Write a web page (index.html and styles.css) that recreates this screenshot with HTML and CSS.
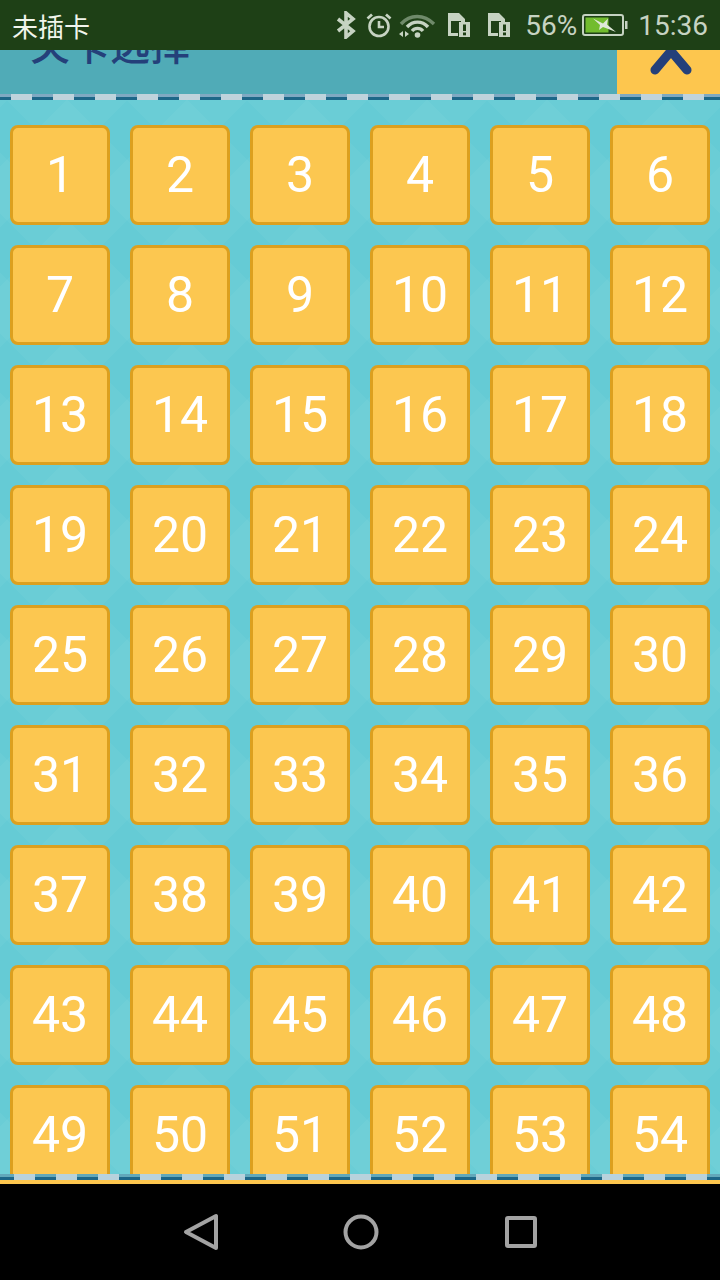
FILE: index.html
```html
<!DOCTYPE html>
<html lang="zh-CN">
<head>
<meta charset="UTF-8" />
<meta name="viewport" content="width=device-width, initial-scale=1" />
<title>关卡选择</title>
<link rel="stylesheet" href="styles.css">
</head>
<body>

<div class="status-bar">
  <span class="carrier">未插卡</span>
  <div class="status-icons">
    <svg class="icon-bt" width="20" height="28" viewBox="0 0 20 28" fill="none" stroke="#c6d3c2" stroke-width="3.600">
      <path d="M2 8l15 12-7 6V2l7 6L2 20"/>
    </svg>
    <svg class="icon-alarm" width="26" height="26" viewBox="0 0 26 26" fill="none" stroke="#c6d3c2" stroke-width="2.600">
      <circle cx="13" cy="14.5" r="9.5"/>
      <path d="M13 9v6h5"/>
      <path d="M1.5 6.5L6 2.5M24.5 6.5L20 2.5" stroke-width="2.800"/>
    </svg>
    <svg class="icon-wifi" width="38" height="26" viewBox="0 0 38 26" fill="none" stroke-width="3.400">
      <path d="M3 12C12 2 26 2 36 12" stroke="#6f8a6a"/>
      <path d="M9 15C15 8.500 24 8.500 30 15" stroke="#c6d3c2"/>
      <path d="M14 19C17 15.500 22 15.500 25 19" stroke="#c6d3c2"/>
      <circle cx="19.500" cy="23" r="2.800" fill="#c6d3c2"/>
      <path d="M5 19v6l-4-3zM7 19v6l4-3z" fill="#c6d3c2"/>
    </svg>
    <svg class="icon-sim" width="24" height="26" viewBox="0 0 24 26">
      <path d="M1 1h11l6 6v3h-4V9H4v12h7v3H1z" fill="#c6d3c2"/>
      <rect x="12" y="10" width="11" height="15" fill="#c6d3c2"/>
      <rect x="16" y="12.500" width="3" height="6.500" fill="#1e4016"/>
      <rect x="16" y="20.500" width="3" height="2.800" fill="#1e4016"/>
    </svg>
    <svg class="icon-sim sim-two" width="24" height="26" viewBox="0 0 24 26">
      <path d="M1 1h11l6 6v3h-4V9H4v12h7v3H1z" fill="#c6d3c2"/>
      <rect x="12" y="10" width="11" height="15" fill="#c6d3c2"/>
      <rect x="16" y="12.500" width="3" height="6.500" fill="#1e4016"/>
      <rect x="16" y="20.500" width="3" height="2.800" fill="#1e4016"/>
    </svg>
    <span class="percent">56%</span>
    <svg class="icon-battery" width="46" height="24" viewBox="0 0 46 24">
      <rect x="1" y="2" width="40" height="20" rx="2" fill="none" stroke="#c6d3c2" stroke-width="2"/>
      <rect x="3.500" y="4.500" width="23" height="15" fill="#72bc2e"/>
      <path d="M43 8h2.500v8H43z" fill="#c6d3c2"/>
      <path d="M11 5.500l10 5 5-5-1 6 9 7.500-13-5-4 3 1-5z" fill="#dfe8d8"/>
    </svg>
    <span class="clock">15:36</span>
  </div>
</div>

<div class="header">
  <h1 class="title">关卡选择</h1>
  <div class="back-btn">
    <svg width="44" height="26" viewBox="0 0 44 26" fill="none" stroke="#24407a" stroke-width="9" stroke-linecap="round" stroke-linejoin="round">
      <path d="M6 20L22 1l16 19"/>
    </svg>
  </div>
</div>
<div class="stitch stitch-top"></div>

<div class="levels">
  <div class="level">1</div><div class="level">2</div><div class="level">3</div><div class="level">4</div><div class="level">5</div><div class="level">6</div>
  <div class="level">7</div><div class="level">8</div><div class="level">9</div><div class="level">10</div><div class="level">11</div><div class="level">12</div>
  <div class="level">13</div><div class="level">14</div><div class="level">15</div><div class="level">16</div><div class="level">17</div><div class="level">18</div>
  <div class="level">19</div><div class="level">20</div><div class="level">21</div><div class="level">22</div><div class="level">23</div><div class="level">24</div>
  <div class="level">25</div><div class="level">26</div><div class="level">27</div><div class="level">28</div><div class="level">29</div><div class="level">30</div>
  <div class="level">31</div><div class="level">32</div><div class="level">33</div><div class="level">34</div><div class="level">35</div><div class="level">36</div>
  <div class="level">37</div><div class="level">38</div><div class="level">39</div><div class="level">40</div><div class="level">41</div><div class="level">42</div>
  <div class="level">43</div><div class="level">44</div><div class="level">45</div><div class="level">46</div><div class="level">47</div><div class="level">48</div>
  <div class="level">49</div><div class="level">50</div><div class="level">51</div><div class="level">52</div><div class="level">53</div><div class="level">54</div>
</div>

<div class="stitch stitch-bottom"></div>
<div class="footer-line"></div>

<div class="nav-bar">
  <svg width="36" height="38" viewBox="0 0 36 38" fill="none" stroke="#a3a3a3" stroke-width="4" stroke-linejoin="round">
    <path d="M3 19L33 3v32z"/>
  </svg>
  <svg width="36" height="38" viewBox="0 0 36 38" fill="none" stroke="#a3a3a3" stroke-width="4">
    <circle cx="18" cy="19" r="15.500"/>
  </svg>
  <svg width="36" height="38" viewBox="0 0 36 38" fill="none" stroke="#a3a3a3" stroke-width="4" stroke-linejoin="round">
    <rect x="4" y="5" width="28" height="28" rx="1"/>
  </svg>
</div>

</body>
</html>
```

FILE: styles.css
```css
* {
  box-sizing: border-box;
}
html, body {
  margin: 0;
  width: 720px;
  height: 1280px;
  overflow: hidden;
}
body {
  font-family: Roboto, "Noto Sans CJK SC", sans-serif;
  background: #000;
}

/* status bar */
.status-bar {
  display: flex;
  align-items: center;
  justify-content: space-between;
  height: 50px;
  padding: 0 12px;
  background: #1e4016;
}
.carrier {
  font-family: "Noto Sans CJK SC", sans-serif;
  font-size: 26px;
  color: #f1f5ec;
}
.status-icons {
  display: flex;
  align-items: center;
  color: #c6d3c2;
  font-size: 28px;
}
.icon-alarm {
  margin-left: 10px;
}
.icon-wifi {
  margin-left: 6px;
}
.icon-sim {
  margin-left: 11px;
}
.sim-two {
  margin-left: 16px;
}
.percent {
  margin-left: 14px;
}
.icon-battery {
  margin-left: 5px;
}
.clock {
  margin-left: 10px;
}

/* header strip, the title is scrolled mostly out of view */
.header {
  display: flex;
  justify-content: space-between;
  height: 44px;
  overflow: hidden;
  background: #50abb7;
}
.title {
  margin: -27px 0 0 30px;
  font-family: "Noto Sans CJK SC", sans-serif;
  font-size: 40px;
  font-weight: 500;
  line-height: 40px;
  color: #24407a;
}
.back-btn {
  display: flex;
  justify-content: center;
  width: 103px;
  padding-left: 4px;
  background: #fdc64e;
}

/* dashed stitching */
.stitch {
  height: 6px;
  background-size: 42px 100%, 100% 100%;
}
.stitch-top {
  background-image:
    linear-gradient(90deg, #bfd3dc 50%, transparent 50%),
    linear-gradient(#7fa9c2 50%, #1d6788 50%);
  background-position: 11px 0, 0 0;
}
.stitch-bottom {
  background-image:
    linear-gradient(90deg, #b8d2dc 50%, transparent 50%),
    linear-gradient(#62a8ba 50%, #1d6788 50%);
  background-position: 14px 0, 0 0;
}
.footer-line {
  height: 4px;
  background: #fdc64e;
}

/* level grid, argyle background */
.levels {
  display: grid;
  grid-template-columns: repeat(6, 100px);
  grid-auto-rows: 100px;
  gap: 20px;
  align-content: start;
  height: 1074px;
  padding: 25px 10px 0;
  overflow: hidden;
  background-color: #65cbd5;
  background-image:
    repeating-linear-gradient(45deg, rgba(255,255,255,.03) 0 42.43px, transparent 42.43px 84.85px),
    repeating-linear-gradient(-45deg, rgba(255,255,255,.03) 0 42.43px, transparent 42.43px 84.85px);
  background-size: 120px 120px;
  background-position: 7px 0, 7px 0;
}
.level {
  display: flex;
  align-items: center;
  justify-content: center;
  border: 3px solid #dca01f;
  border-radius: 8px;
  background: #fcc750;
  color: #fff;
  font-size: 50px;
}

/* nav bar */
.nav-bar {
  display: flex;
  align-items: center;
  justify-content: center;
  gap: 124px;
  height: 96px;
  padding-left: 2px;
  background: #000;
}
```
